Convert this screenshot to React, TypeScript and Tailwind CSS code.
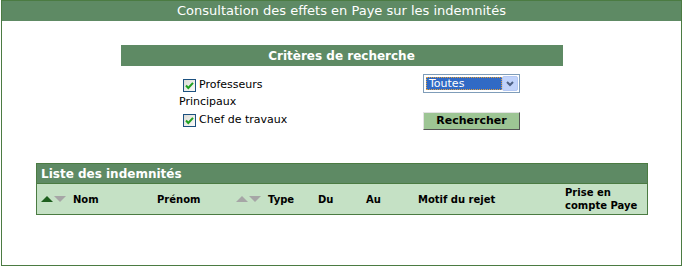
import React from "react";

const font = { fontFamily: '"DejaVu Sans", Verdana, sans-serif' };

function Check() {
  return (
    <span className="inline-flex h-[13px] w-[13px] shrink-0 items-center justify-center border border-[#1c5180] bg-gradient-to-br from-[#dcdcd7] to-[#fbfbf9]">
      <svg width="9" height="9" viewBox="0 0 9 9">
        <path d="M1 4.5 L3.3 7 L8 1.8" fill="none" stroke="#21a121" strokeWidth="2" />
      </svg>
    </span>
  );
}

function Arrow({ up, color }: { up?: boolean; color: string }) {
  return (
    <svg width="12" height="6" viewBox="0 0 12 6" className="shrink-0">
      <path d={up ? "M0 6 L6 0 L12 6 Z" : "M0 0 L12 0 L6 6 Z"} fill={color} />
    </svg>
  );
}

export default function App() {
  return (
    <div className="h-[266px] w-[682px] bg-white pl-px" style={font}>
      <div className="flex h-[266px] w-[681px] flex-col border border-[#4b7b42]">
        <div className="flex h-[20px] items-center justify-center bg-[#5e8a64] text-[13px] text-white">
          Consultation des effets en Paye sur les indemnités
        </div>

        <div className="mx-auto mt-[24px] flex h-[21px] w-[442px] items-center justify-center bg-[#5e8a64] text-[12px] font-bold text-white">
          Critères de recherche
        </div>

        <div className="ml-[177px] mt-[7px] flex h-[57px]">
          <div className="flex w-[244px] flex-col text-[11px] text-black">
            <div className="mt-[3px] w-[110px] leading-[17px]">
              <span className="ml-[4px] mr-[3px] inline-flex translate-y-[2px]">
                <Check />
              </span>
              Professeurs Principaux
            </div>
            <div className="mt-[2px] flex items-center gap-[3px] pl-[4px]">
              <Check />
              <span>Chef de travaux</span>
            </div>
          </div>
          <div className="flex w-[97px] flex-col">
            <div className="mt-[1px] flex h-[19px] items-center border border-[#7f9db9] bg-white pl-[2px] pr-px">
              <div className="flex h-[13px] w-[76px] items-center border border-dotted border-[#e0a040] bg-[#316ac5] pl-[2px] text-[11px] leading-none text-white">
                Toutes
              </div>
              <div className="ml-auto flex h-[15px] w-[16px] items-center justify-center rounded-[2px] border border-[#b4c8f4] bg-[#c1d3fb]">
                <svg width="8" height="6" viewBox="0 0 8 6">
                  <path d="M1 1 L4 4 L7 1" fill="none" stroke="#4d6185" strokeWidth="2" />
                </svg>
              </div>
            </div>
            <button className="mt-[19px] flex h-[18px] items-center justify-center border border-t-[#e3e3e3] border-l-[#e3e3e3] border-b-[#555] border-r-[#555] bg-[#9dc594] text-[11px] font-bold text-black">
              Rechercher
            </button>
          </div>
        </div>

        <div className="ml-[34px] mt-[33px] w-[612px] border border-[#4b7b42]">
          <div className="flex h-[19px] items-center bg-[#5e8a64] pl-[4px] text-[12px] font-bold text-white">
            Liste des indemnités
          </div>
          <div className="flex h-[31px] items-center border-t border-[#4b7b42] bg-[#c5e1c5] text-[10px] font-bold text-black">
            <div className="flex w-[120px] items-center pl-[4px]">
              <Arrow up color="#1f5f1f" />
              <span className="ml-px"><Arrow color="#a6a6a6" /></span>
              <span className="ml-[7px]">Nom</span>
            </div>
            <div className="w-[79px]">Prénom</div>
            <div className="flex w-[82px] items-center">
              <Arrow up color="#a6a6a6" />
              <span className="ml-px"><Arrow color="#a6a6a6" /></span>
              <span className="ml-[7px]">Type</span>
            </div>
            <div className="w-[48px]">Du</div>
            <div className="w-[52px]">Au</div>
            <div className="w-[147px]">Motif du rejet</div>
            <div className="leading-[13px]">
              Prise en
              <br />
              compte Paye
            </div>
          </div>
        </div>
      </div>
    </div>
  );
}
